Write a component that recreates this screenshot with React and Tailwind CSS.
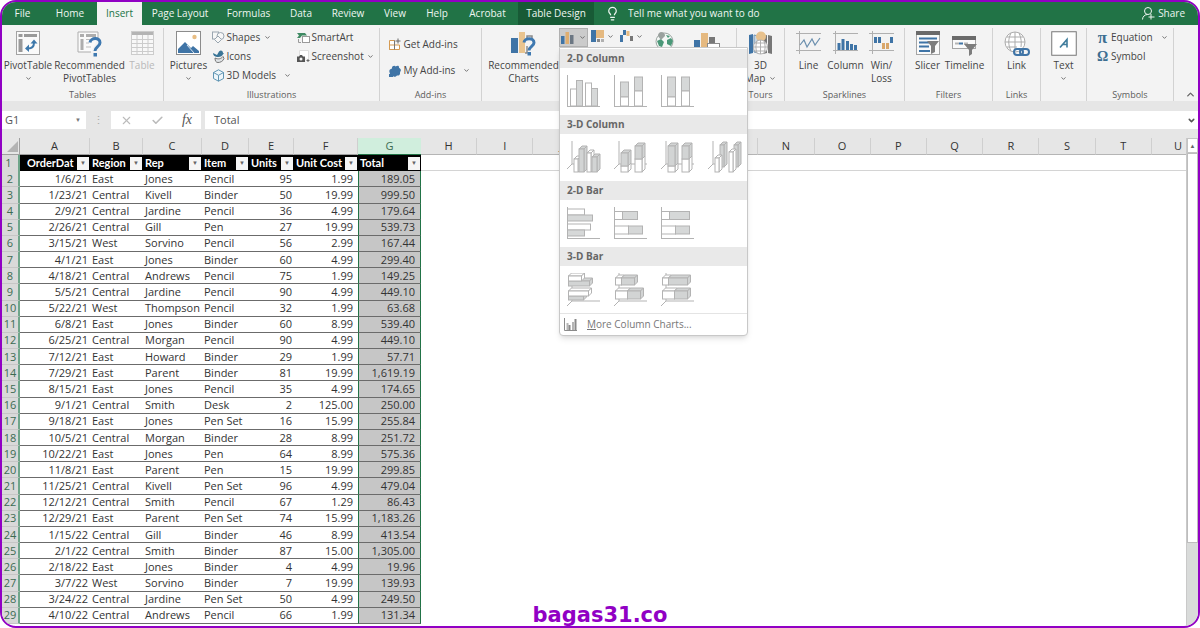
import React, { useState } from "react";
import { Lightbulb, X, Check, ChevronDown, ChevronUp } from "lucide-react";

const tabs = [
  { name: "File", width: "w-[41px]" },
  { name: "Home", width: "w-[54px]" },
  { name: "Insert", width: "w-[45px]" },
  { name: "Page Layout", width: "w-[76px]" },
  { name: "Formulas", width: "w-[61px]" },
  { name: "Data", width: "w-[44px]" },
  { name: "Review", width: "w-[50px]" },
  { name: "View", width: "w-[44px]" },
  { name: "Help", width: "w-[40px]" },
  { name: "Acrobat", width: "w-[61px]" },
  { name: "Table Design", width: "w-[76px]" },
];

const columns = [
  { letter: "A", title: "OrderDat", width: "w-[70px]", align: "text-right pr-[2px]" },
  { letter: "B", title: "Region", width: "w-[53px]", align: "pl-[2px]" },
  { letter: "C", title: "Rep", width: "w-[59px]", align: "pl-[2px]" },
  { letter: "D", title: "Item", width: "w-[47px]", align: "pl-[2px]" },
  { letter: "E", title: "Units", width: "w-[45px]", align: "text-right pr-[2px]" },
  { letter: "F", title: "Unit Cost", width: "w-[64px]", align: "text-right pr-[5px]" },
  { letter: "G", title: "Total", width: "w-[63px]", align: "text-right pr-[5px]" },
];

const emptyColumns = ["H", "I", "J", "K", "L", "M", "N", "O", "P", "Q", "R", "S", "T"];

const orders = [
  ["1/6/21", "East", "Jones", "Pencil", "95", "1.99", "189.05"],
  ["1/23/21", "Central", "Kivell", "Binder", "50", "19.99", "999.50"],
  ["2/9/21", "Central", "Jardine", "Pencil", "36", "4.99", "179.64"],
  ["2/26/21", "Central", "Gill", "Pen", "27", "19.99", "539.73"],
  ["3/15/21", "West", "Sorvino", "Pencil", "56", "2.99", "167.44"],
  ["4/1/21", "East", "Jones", "Binder", "60", "4.99", "299.40"],
  ["4/18/21", "Central", "Andrews", "Pencil", "75", "1.99", "149.25"],
  ["5/5/21", "Central", "Jardine", "Pencil", "90", "4.99", "449.10"],
  ["5/22/21", "West", "Thompson", "Pencil", "32", "1.99", "63.68"],
  ["6/8/21", "East", "Jones", "Binder", "60", "8.99", "539.40"],
  ["6/25/21", "Central", "Morgan", "Pencil", "90", "4.99", "449.10"],
  ["7/12/21", "East", "Howard", "Binder", "29", "1.99", "57.71"],
  ["7/29/21", "East", "Parent", "Binder", "81", "19.99", "1,619.19"],
  ["8/15/21", "East", "Jones", "Pencil", "35", "4.99", "174.65"],
  ["9/1/21", "Central", "Smith", "Desk", "2", "125.00", "250.00"],
  ["9/18/21", "East", "Jones", "Pen Set", "16", "15.99", "255.84"],
  ["10/5/21", "Central", "Morgan", "Binder", "28", "8.99", "251.72"],
  ["10/22/21", "East", "Jones", "Pen", "64", "8.99", "575.36"],
  ["11/8/21", "East", "Parent", "Pen", "15", "19.99", "299.85"],
  ["11/25/21", "Central", "Kivell", "Pen Set", "96", "4.99", "479.04"],
  ["12/12/21", "Central", "Smith", "Pencil", "67", "1.29", "86.43"],
  ["12/29/21", "East", "Parent", "Pen Set", "74", "15.99", "1,183.26"],
  ["1/15/22", "Central", "Gill", "Binder", "46", "8.99", "413.54"],
  ["2/1/22", "Central", "Smith", "Binder", "87", "15.00", "1,305.00"],
  ["2/18/22", "East", "Jones", "Binder", "4", "4.99", "19.96"],
  ["3/7/22", "West", "Sorvino", "Binder", "7", "19.99", "139.93"],
  ["3/24/22", "Central", "Jardine", "Pen Set", "50", "4.99", "249.50"],
  ["4/10/22", "Central", "Andrews", "Pencil", "66", "1.99", "131.34"],
];

/* ---------- ribbon icons ---------- */

const PivotIcon = () => (
  <svg width="24" height="24" viewBox="0 0 24 24" fill="none">
    <rect x="0.5" y="0.5" width="23" height="23" fill="#fafafa" stroke="#a3a3a3" />
    <rect x="2.5" y="3" width="4" height="3" fill="#9a9a9a" />
    <rect x="8" y="3" width="13" height="3" fill="#9a9a9a" />
    <rect x="2.5" y="8" width="4" height="13" fill="#9a9a9a" />
    <path d="M12 17.500c4 0 6-2 6-6" stroke="#3d78ab" strokeWidth="2" />
    <path d="M14.500 12.500l3.500-4 3.500 4zM13 13.500l-4 4 4 3.500z" fill="#3d78ab" />
  </svg>
);

const RecommendedPivotIcon = () => (
  <svg width="25" height="26" viewBox="0 0 25 26" fill="none">
    <path d="M21 8V1H1v20h13" fill="#fafafa" stroke="#adadad" />
    <path d="M3 4.500h4M9 4.500h10M5 8v11" stroke="#adadad" strokeWidth="3" />
    <path d="M9 8.500h4M9 12h3M9 16h5" stroke="#bdbdbd" />
    <path d="M13 11.500c.5-5 10-5.500 10 .2 0 4-5 3.800-5 8.300" stroke="#3f79b0" strokeWidth="3" />
    <rect x="16.500" y="22" width="3.500" height="3.500" fill="#3f79b0" />
  </svg>
);

const TableIcon = () => (
  <svg width="23" height="24" viewBox="0 0 23 24" fill="none" stroke="#cccccc">
    <rect x="0.5" y="0.5" width="22" height="23" fill="#f8f8f8" />
    <rect x="1" y="1" width="21" height="3" fill="#b4b4b4" stroke="none" />
    <path d="M0 8.500h23M0 12.500h23M0 16.500h23M0 20.500h23M6 4v20M11.500 4v20M17 4v20" />
  </svg>
);

const PicturesIcon = () => (
  <svg width="25" height="24" viewBox="0 0 25 24" fill="none">
    <rect x="0.5" y="0.5" width="24" height="23" fill="#fff" stroke="#8c8c8c" />
    <circle cx="18.500" cy="6" r="2.200" fill="#e8bd84" />
    <path d="M2 22v-4l7-7 6 6 2-2 6 5v2z" fill="#3f74a6" />
    <path d="M11 14l7 8" stroke="#fff" strokeWidth="0.8" />
  </svg>
);

const ShapesIcon = () => (
  <svg width="13" height="13" viewBox="0 0 13 13" fill="#f7f7f7" stroke="#9aa6b0">
    <rect x="0.5" y="1" width="6" height="7" />
    <circle cx="8.500" cy="5" r="3.500" />
    <path d="M6 5l3.500 3.500L6 12 2.500 8.500z" />
  </svg>
);

const DuckIcon = () => (
  <svg width="13" height="13" viewBox="0 0 13 13" fill="none">
    <path d="M1 3l4 2 2-3.500C9-.5 11 1 11 3l1 .5-1 .8C10.500 6 8 7.500 5 7 2.500 6.700 1 5 1 3z" fill="#3a7597" />
    <path d="M3 8c3 1.500 6 1 8-1.500l1 2c-1 3-4 4-6 4s-3-1.500-3-4.500z" fill="#dfe3e6" stroke="#777" />
  </svg>
);

const CubeIcon = () => (
  <svg width="13" height="13" viewBox="0 0 13 13" fill="none" stroke="#5f95b3">
    <path d="M6.500.8l5 2.700v6l-5 2.700-5-2.700v-6z" fill="#eef6fa" />
    <path d="M1.500 3.500l5 2.800 5-2.800M6.500 6.300v5.900" />
  </svg>
);

const SmartArtIcon = () => (
  <svg width="13" height="12" viewBox="0 0 13 12" fill="none">
    <path d="M0 1h8l2 2.500H5L3 6H0l2-2.500z" fill="#3f8a63" />
    <rect x="5.500" y="4.500" width="7" height="6" fill="#fff" stroke="#9a9a9a" />
    <path d="M1.500 7v3.500H4" stroke="#9a9a9a" />
  </svg>
);

const ScreenshotIcon = () => (
  <svg width="13" height="13" viewBox="0 0 13 13" fill="none">
    <path d="M2.500 5V.5h9V9" fill="#fff" stroke="#dedede" />
    <path d="M0 6.500h2l1-1.500h2l1 1.500h2V12H0z" fill="#555" />
    <circle cx="4" cy="9" r="1.500" fill="#f3f3f3" />
    <path d="M9.500 10.500h3M11 9v3" stroke="#666" />
  </svg>
);

const StoreIcon = () => (
  <svg width="12" height="13" viewBox="0 0 12 13" fill="none">
    <path d="M.5 2.500h5v9h-5zM.5 7h10v4.500h-10z" stroke="#d69b52" fill="#fff" />
    <path d="M5.500 2.500v9" stroke="#777" />
    <path d="M9 .5v5M6.500 3h5" stroke="#666" />
  </svg>
);

const MyAddinsIcon = () => (
  <svg width="12" height="12" viewBox="0 0 12 12" fill="#3f74a6">
    <path d="M3 3.500C2.500 1 6 0 6.500 1.500 9 0 10.500 1 10 3c2 .5 2.500 3 1 4 .5 2.500-1 4-3 3.500C6.500 12.500 4 12 4 10.500 1.500 11.500 0 10.500 1 8.500-.5 6 .5 4 3 3.500z" />
    <path d="M0 9h4v3H0z" />
  </svg>
);

const RecommendedChartsIcon = () => (
  <svg width="25" height="26" viewBox="0 0 25 26" fill="none">
    <rect x="0" y="7" width="7" height="15" fill="#3f74a6" />
    <rect x="8" y="1" width="6" height="21" fill="#e9c48f" />
    <path d="M16 9V5h5v4M16 15v7h-2" stroke="#8b8b8b" strokeWidth="1.500" />
    <path d="M13 11.500c.5-5 10-5 10 .2 0 3.500-5 3.800-5 7.800" stroke="#3f79b0" strokeWidth="3" />
    <rect x="16.500" y="21" width="3.500" height="3.500" fill="#3f79b0" />
  </svg>
);

const MiniColumnIcon = () => (
  <svg width="13" height="12" viewBox="0 0 13 12">
    <rect x="0" y="4" width="3.500" height="8" fill="#3f74a6" />
    <rect x="4.500" y="0" width="3.500" height="12" fill="#dfae70" />
    <rect x="9" y="3" width="3.500" height="9" fill="#6c7783" />
  </svg>
);

const MiniTreemapIcon = () => (
  <svg width="13" height="12" viewBox="0 0 13 12">
    <rect x="0" y="0" width="5" height="12" fill="#3f74a6" />
    <rect x="5" y="0" width="8" height="8" fill="#e5b980" />
    <rect x="6" y="9" width="3" height="3" fill="#8a8a8a" />
    <rect x="10" y="9" width="3" height="3" fill="#b0b0b0" />
  </svg>
);

const MiniWaterfallIcon = () => (
  <svg width="13" height="12" viewBox="0 0 13 12">
    <rect x="0" y="5" width="3" height="7" fill="#3f74a6" />
    <rect x="3" y="0" width="3" height="5" fill="#3f74a6" />
    <rect x="6.500" y="1" width="3" height="5" fill="#e5b980" />
    <rect x="10" y="6" width="3" height="5" fill="#777" />
  </svg>
);

const MapsIcon = () => (
  <svg width="19" height="18" viewBox="0 0 19 18">
    <circle cx="9.500" cy="9.500" r="8.500" fill="#f4f7f5" stroke="#9aa5a0" />
    <path d="M2 9l4-2 3 3-2 5-3-1zM12 8l4-2 2 3-2 5-4-2zM11 3l4 1-2 2z" fill="#4a9878" />
    <path d="M6 0a4 4 0 0 1 4 4L6 8 3 4a4 4 0 0 1 3-4z" fill="#9aa19e" />
  </svg>
);

const PivotChartIcon = () => (
  <svg width="26" height="18" viewBox="0 0 26 18">
    <rect x="0" y="8" width="6" height="10" fill="#3f74a6" />
    <rect x="7" y="1" width="7" height="17" fill="#e5b980" />
    <rect x="15" y="5" width="6" height="8" fill="#777" />
    <rect x="13.500" y="11.500" width="12" height="6" fill="#fff" stroke="#8a8a8a" />
  </svg>
);

const Map3dIcon = () => (
  <svg width="23" height="24" viewBox="0 0 23 24" fill="none">
    <path d="M0 4l4-1v19l-4 1z" fill="#3f74a6" />
    <path d="M5 4l4 1v17l-4-1z" fill="#c9d7e3" stroke="#6f93b3" />
    <path d="M14 5l4-1v18l-4 1zM19 4l4 1v18l-4-1z" fill="#777" />
    <circle cx="12" cy="5.500" r="5" fill="#e7c18d" />
    <circle cx="11.500" cy="16" r="7" fill="#fff" stroke="#b0b0b0" />
    <path d="M4.500 16h14M6 12h11M6 20h11M11.500 9v14M8 10c-1.500 4-1.500 8 0 12M15 10c1.500 4 1.500 8 0 12" stroke="#b0b0b0" />
  </svg>
);

const LineIcon = () => (
  <svg width="25" height="23" viewBox="0 0 25 23" fill="none">
    <path d="M0 2.500h25M0 19.500h25M3.500 0v23" stroke="#b0b0b0" />
    <path d="M4 14l4-5 3 7 5-8 3 6 5-7" stroke="#6b8fae" strokeWidth="1.200" />
  </svg>
);

const ColumnIcon = () => (
  <svg width="25" height="23" viewBox="0 0 25 23" fill="none">
    <path d="M0 2.500h25M0 19.500h25M2.500 0v23" stroke="#b0b0b0" />
    <path d="M6 19v-7M10 19V8M14.500 19v-9M18.500 19v-6M22.500 19v-5" stroke="#3f74a6" strokeWidth="3" />
  </svg>
);

const WinLossIcon = () => (
  <svg width="25" height="23" viewBox="0 0 25 23" fill="none">
    <path d="M0 2.500h25M0 19.500h25M3.500 0v23" stroke="#b0b0b0" />
    <path d="M6.500 6v6M10.500 6v6M22.500 6v6" stroke="#3f74a6" strokeWidth="3" />
    <path d="M14.500 12v6M18.500 12v6" stroke="#d9a76b" strokeWidth="3" />
  </svg>
);

const SlicerIcon = () => (
  <svg width="24" height="24" viewBox="0 0 24 24" fill="none">
    <rect x="0.5" y="0.5" width="23" height="23" fill="#fafafa" stroke="#a5a5a5" />
    <rect width="24" height="4" fill="#6a6a6a" />
    <path d="M3 7.500h18M3 11.500h10M3 15.500h10M3 20h11" stroke="#3f74a6" strokeWidth="2" />
    <path d="M11 10h12l-4 5v6l-4 2v-8z" fill="#7d7d7d" />
  </svg>
);

const TimelineIcon = () => (
  <svg width="25" height="25" viewBox="0 0 25 25" fill="none">
    <rect x="0.5" y="5.500" width="23" height="12" fill="#fafafa" stroke="#a5a5a5" />
    <rect y="5" width="24" height="4" fill="#6a6a6a" />
    <path d="M3 12.500h4M12 12.500h4" stroke="#b5b5b5" strokeWidth="2" />
    <path d="M7 12.500h4" stroke="#3f74a6" strokeWidth="2" />
    <path d="M12 13h13l-5 6v4l-3 2v-6z" fill="#7d7d7d" />
  </svg>
);

const LinkIcon = () => (
  <svg width="26" height="26" viewBox="0 0 26 26" fill="none">
    <circle cx="11" cy="11" r="10" fill="#fff" stroke="#ababab" />
    <path d="M1 11h20M3 6h16M3 16h10M11 1v17M7 2c-3 6-3 12 0 18M15 2c2.500 5 2.500 10 2 14" stroke="#ababab" />
    <rect x="10" y="18" width="9" height="6" rx="3" stroke="#3f74a6" strokeWidth="2" />
    <rect x="16" y="18" width="9" height="6" rx="3" stroke="#3f74a6" strokeWidth="2" />
  </svg>
);

const TextIcon = () => (
  <svg width="26" height="25" viewBox="0 0 26 25" fill="none">
    <rect x="0.750" y="0.750" width="24.500" height="23.500" fill="#fff" stroke="#777" />
    <path d="M9 16.500l7-8 0 8M11.500 13.500h4.500" stroke="#3f7c9c" strokeWidth="1.600" />
  </svg>
);

const ShareIcon = () => (
  <svg width="13" height="13" viewBox="0 0 13 13" fill="none" stroke="currentColor">
    <circle cx="6" cy="4" r="3.500" />
    <path d="M.5 12.500C.5 9.500 3 7.500 5.500 7.500M9 7v5.500M6.500 10h6" />
  </svg>
);

/* ---------- chart gallery icons ---------- */

const Thumb = ({ children }) => (
  <svg width="34" height="34" viewBox="0 0 34 34" fill="none" stroke="#b3b3b3">
    {children}
  </svg>
);

const Axes2d = () => <path d="M.5 0v31.500M0 31.500h33" />;

// flat bars: x, y, width, height, shaded
const Bars = ({ items }) =>
  items.map(([x, y, w, h, filled], i) => (
    <rect key={i} x={x} y={y} width={w} height={h} fill={filled ? "#d6d8d8" : "#fff"} />
  ));

// same numbers, with a top and a right face
const Boxes = ({ items }) =>
  items.map(([x, y, w, h, filled, d = 3], i) => (
    <g key={i} fill={filled ? "#d2d4d4" : "#fff"}>
      <path d={`M${x} ${y}l${d} ${-d}h${w}l${-d} ${d}z`} />
      <path d={`M${x + w} ${y}l${d} ${-d}v${h}l${-d} ${d}z`} />
      <rect x={x} y={y} width={w} height={h} />
    </g>
  ));

const gallery = [
  {
    title: "2-D Column",
    charts: [
      { name: "Clustered Column", art: <><Bars items={[[3.5, 14, 6, 17], [9.5, 5.500, 6, 25.500, 1], [18.5, 8, 6, 23], [24.5, 13.500, 6, 17.500, 1]]} /><Axes2d /></> },
      { name: "Stacked Column", art: <><Bars items={[[6.5, 7, 8, 15, 1], [6.5, 22, 8, 9], [20.5, 2, 8, 14, 1], [20.5, 16, 8, 15]]} /><Axes2d /></> },
      { name: "100% Stacked Column", art: <><Bars items={[[6.5, 2, 8, 20, 1], [6.5, 22, 8, 9], [20.5, 2, 8, 14, 1], [20.5, 16, 8, 15]]} /><Axes2d /></> },
    ],
  },
  {
    title: "3-D Column",
    charts: [
      { name: "3-D Clustered Column", art: <><path d="M5 0v23M5 23l-5 5M5 23h5" /><Boxes items={[[7, 18, 4, 13], [12, 8, 5, 23, 1], [20, 12, 4, 19], [25, 16, 5, 15, 1]]} /></> },
      { name: "3-D Stacked Column", art: <><path d="M5 0v23M5 23l-5 5M5 23h28" /><Boxes items={[[7, 25, 7, 6], [7, 12, 7, 13, 1], [21, 18, 7, 13], [21, 5, 7, 13, 1]]} /></> },
      { name: "3-D 100% Stacked Column", art: <><path d="M5 0v23M5 23l-5 5M5 23h28" /><Boxes items={[[7, 25, 7, 6], [7, 5, 7, 20, 1], [21, 18, 7, 13], [21, 5, 7, 13, 1]]} /></> },
      { name: "3-D Column", art: <><path d="M5 0v23M5 23l-5 5M5 23h5" /><Boxes items={[[12, 4, 4, 22, 1], [26, 4, 4, 22, 1], [7, 17, 4, 14], [21, 11, 4, 20]]} /></> },
    ],
  },
  {
    title: "2-D Bar",
    charts: [
      { name: "Clustered Bar", art: <><Bars items={[[0.5, 2, 17, 6], [0.5, 8, 25, 6, 1], [0.5, 17, 23, 6], [0.5, 23, 17, 6, 1]]} /><Axes2d /></> },
      { name: "Stacked Bar", art: <><Bars items={[[0.5, 4.500, 8, 8], [8.5, 4.500, 15, 8, 1], [0.5, 19, 14, 8], [14.5, 19, 14, 8, 1]]} /><Axes2d /></> },
      { name: "100% Stacked Bar", art: <><Bars items={[[0.5, 4.500, 8, 8], [8.5, 4.500, 20, 8, 1], [0.5, 19, 14, 8], [14.5, 19, 14, 8, 1]]} /><Axes2d /></> },
    ],
  },
  {
    title: "3-D Bar",
    charts: [
      { name: "3-D Clustered Bar", art: <><path d="M5 0v28l-5 5M5 28h28" /><Boxes items={[[1.5, 23, 15, 4, 1], [1.5, 18, 20, 5], [1.5, 8, 21, 5, 1], [1.5, 3, 13, 5]]} /></> },
      { name: "3-D Stacked Bar", art: <><path d="M5 0v28l-5 5M5 28h28" /><Boxes items={[[1.5, 18, 12, 8], [13.5, 18, 13, 8, 1], [1.5, 5, 6, 7], [7.5, 5, 13, 7, 1]]} /></> },
      { name: "3-D 100% Stacked Bar", art: <><path d="M5 0v28l-5 5M5 28h28" /><Boxes items={[[1.5, 18, 12, 8], [13.5, 18, 13, 8, 1], [1.5, 5, 6, 7], [7.5, 5, 19, 7, 1]]} /></> },
    ],
  },
];

/* ---------- ribbon building blocks ---------- */

const Caret = () => <ChevronDown className="w-[7px] h-[7px] shrink-0 text-[#666]" strokeWidth={3} />;

const Group = ({ label, className, align = "justify-center", children }) => (
  <div className={`flex flex-col shrink-0 pt-[3px] ${className}`}>
    <div className="flex flex-1 border-r border-[#d2d2d2] flex-col">
      <div className={`flex flex-1 ${align}`}>{children}</div>
      <div className="h-[12px] text-center text-[9px] leading-[12px] text-[#5c5c5c]">{label}</div>
    </div>
  </div>
);

const BigButton = ({ icon, lines, caret, className = "", disabled }) => (
  <button
    disabled={disabled}
    className={`flex flex-col items-center shrink-0 pt-[3px] whitespace-nowrap text-[#444] disabled:text-[#b9b9b9] ${className}`}
  >
    <span className="flex h-[28px] items-start">{icon}</span>
    {lines.map((line, i) => (
      <span key={line} className="flex items-center gap-[4px] text-[10px] leading-[13px]">
        {line}
        {caret === "inline" && i === lines.length - 1 && <Caret />}
      </span>
    ))}
    {caret === "below" && <span className="pt-[3px]"><Caret /></span>}
  </button>
);

const SmallButton = ({ icon, label, caret, gap = "gap-[4px]", className = "" }) => (
  <button className={`flex items-center gap-[2px] whitespace-nowrap text-[10px] leading-[19px] text-[#444] ${className}`}>
    <span className="flex w-[13px] shrink-0 justify-center">{icon}</span>
    <span className={`flex items-center ${gap}`}>
      {label}
      {caret && <Caret />}
    </span>
  </button>
);

const ChartMenu = () => (
  <div className="absolute left-0 top-full z-20 w-[189px] rounded-b-sm border border-[#c8c8c8] bg-white pt-px shadow-md">
    {gallery.map((section) => (
      <section key={section.title}>
        <h3 className="h-[19px] bg-[#e9e9e9] pl-[7px] text-[10px] font-bold leading-[19px] text-[#666]">{section.title}</h3>
        <div className="flex h-[47px] items-center gap-[13px] pl-[7px]">
          {section.charts.map((chart) => (
            <button key={chart.name} aria-label={chart.name}>
              <Thumb>{chart.art}</Thumb>
            </button>
          ))}
        </div>
      </section>
    ))}
    <button className="flex h-[22px] w-full items-center gap-[10px] border-t border-[#e4e4e4] pl-[4px] text-[10px] text-[#777]">
      <svg width="13" height="13" viewBox="0 0 13 13" fill="none" stroke="#8a8a8a">
        <path d="M.5 0v12.500H13" />
        <path d="M3.500 5v7M9 4v8" stroke="#b5b5b5" strokeWidth="2" />
        <path d="M5.500 7v5M11.500 1v11" strokeWidth="2" />
      </svg>
      <span>
        <span className="underline">M</span>ore Column Charts...
      </span>
    </button>
  </div>
);

const TabBar = ({ active, onSelect }) => (
  <nav className="flex h-[23px] shrink-0 bg-[#217346] text-[10px] text-[#eef6f1]">
    {tabs.map((tab) => (
      <button
        key={tab.name}
        onClick={() => onSelect(tab.name)}
        className={`shrink-0 whitespace-nowrap text-center ${tab.width} ${
          active === tab.name ? "bg-[#f3f3f3] text-[#217346]" : tab.name === "Table Design" ? "bg-[#185a36]" : ""
        }`}
      >
        {tab.name}
      </button>
    ))}
    <label className="flex flex-1 items-center gap-[8px] pl-[11px]">
      <Lightbulb className="h-[15px] w-[15px] shrink-0" strokeWidth={2} />
      <input
        aria-label="Tell me what you want to do"
        placeholder="Tell me what you want to do"
        className="w-full bg-transparent outline-none placeholder:text-[#eef6f1]"
      />
    </label>
    <button className="flex items-center gap-[3px] pr-[13px]">
      <ShareIcon />
      Share
    </button>
  </nav>
);

const Ribbon = ({ menuOpen, onToggleMenu }) => (
  <div className="flex h-[76px] shrink-0 bg-[#f3f3f3]">
    <Group label="Tables" className="w-[162px]" align="justify-start">
      <BigButton className="w-[52px]" icon={<PivotIcon />} lines={["PivotTable"]} caret="below" />
      <BigButton className="w-[71px]" icon={<RecommendedPivotIcon />} lines={["Recommended", "PivotTables"]} />
      <BigButton className="w-[34px]" icon={<TableIcon />} lines={["Table"]} disabled />
    </Group>
    <Group label="Illustrations" className="w-[216px]">
      <BigButton className="w-[46px]" icon={<PicturesIcon />} lines={["Pictures"]} caret="below" />
      <div className="flex w-[85px] flex-col">
        <SmallButton icon={<ShapesIcon />} label="Shapes" caret />
        <SmallButton icon={<DuckIcon />} label="Icons" />
        <SmallButton icon={<CubeIcon />} label="3D Models" caret gap="gap-[8px]" />
      </div>
      <div className="flex w-[81px] flex-col">
        <SmallButton icon={<SmartArtIcon />} label="SmartArt" />
        <SmallButton icon={<ScreenshotIcon />} label="Screenshot" caret gap="gap-[3px]" />
      </div>
    </Group>
    <Group label="Add-ins" className="w-[102px]">
      <div className="flex w-[84px] flex-col gap-[7px] pt-[7px]">
        <SmallButton icon={<StoreIcon />} label="Get Add-ins" />
        <SmallButton icon={<MyAddinsIcon />} label="My Add-ins" caret gap="gap-[8px]" />
      </div>
    </Group>
    <Group label="" className="min-w-[255px] flex-1">
      <div className="flex flex-1 pl-[6px]">
        <BigButton className="w-[71px]" icon={<RecommendedChartsIcon />} lines={["Recommended", "Charts"]} />
        <div className="relative flex h-[19px]">
          <button
            aria-label="Insert Column or Bar Chart"
            onClick={onToggleMenu}
            className="flex w-[29px] items-center justify-center gap-[5px] border border-[#b0b0b0] bg-[#cbcbcb]"
          >
            <MiniColumnIcon />
            <Caret />
          </button>
          {menuOpen && <ChartMenu />}
        </div>
        <div className="flex items-start gap-[6px] pl-[3px] pt-[2px]">
          <button aria-label="Insert Hierarchy Chart" className="flex items-center gap-[3px]">
            <MiniTreemapIcon />
            <Caret />
          </button>
          <button aria-label="Insert Waterfall Chart" className="flex items-center gap-[3px]">
            <MiniWaterfallIcon />
            <Caret />
          </button>
        </div>
        <button aria-label="Maps" className="flex items-start pl-[12px] pt-[4px]">
          <MapsIcon />
        </button>
        <button aria-label="PivotChart" className="flex items-start pl-[20px] pt-[4px]">
          <PivotChartIcon />
        </button>
      </div>
    </Group>
    <Group label="Tours" className="w-[48px]">
      <BigButton icon={<Map3dIcon />} lines={["3D", "Map"]} caret="inline" />
    </Group>
    <Group label="Sparklines" className="w-[120px]">
      <BigButton className="w-[36px]" icon={<LineIcon />} lines={["Line"]} />
      <BigButton className="w-[38px]" icon={<ColumnIcon />} lines={["Column"]} />
      <BigButton className="w-[34px]" icon={<WinLossIcon />} lines={["Win/", "Loss"]} />
    </Group>
    <Group label="Filters" className="w-[88px]">
      <BigButton className="w-[32px]" icon={<SlicerIcon />} lines={["Slicer"]} />
      <BigButton className="w-[42px]" icon={<TimelineIcon />} lines={["Timeline"]} />
    </Group>
    <Group label="Links" className="w-[48px]">
      <BigButton icon={<LinkIcon />} lines={["Link"]} />
    </Group>
    <Group label="" className="w-[46px]">
      <BigButton icon={<TextIcon />} lines={["Text"]} caret="below" />
    </Group>
    <Group label="Symbols" className="w-[87px]">
      <div className="flex w-[68px] flex-col">
        <SmallButton
          icon={<span className="font-['Liberation_Serif',serif] text-[17px] font-bold text-[#3c6e91]">π</span>}
          label="Equation"
          caret
          gap="gap-[8px]"
        />
        <SmallButton
          icon={<span className="font-['Liberation_Serif',serif] text-[14px] font-bold text-[#3c6e91]">Ω</span>}
          label="Symbol"
        />
      </div>
    </Group>
    <button aria-label="Collapse the Ribbon" className="flex w-[24px] shrink-0 items-end justify-end pb-px pr-[2px]">
      <ChevronUp className="h-[11px] w-[11px] text-[#666]" strokeWidth={3} />
    </button>
  </div>
);

const FormulaBar = () => (
  <div className="flex h-[37px] shrink-0 bg-[#e6e6e6] pb-[9px] pt-[10px] text-[11px] text-[#555]">
    <div className="flex w-[84px] shrink-0 items-center justify-between bg-white pl-[3px] pr-[5px]">
      <input aria-label="Name Box" defaultValue="G1" className="w-[50px] outline-none" />
      <span className="text-[6px] text-[#777]">▼</span>
    </div>
    <span className="w-[25px] text-center leading-[18px] text-[#aaa]">⋮</span>
    <div className="flex w-[90px] shrink-0 items-center justify-around bg-white">
      <button aria-label="Cancel"><X className="h-[13px] w-[13px] text-[#bbb]" strokeWidth={2} /></button>
      <button aria-label="Enter"><Check className="h-[13px] w-[13px] text-[#bbb]" strokeWidth={3} /></button>
      <button className="font-['Liberation_Serif',serif] text-[14px] italic leading-none">fx</button>
    </div>
    <div className="ml-[4px] flex flex-1 items-center bg-white pl-[9px] pr-[2px]">
      <input aria-label="Formula Bar" defaultValue="Total" className="flex-1 outline-none" />
      <ChevronDown className="h-[9px] w-[9px] text-[#555]" strokeWidth={4} />
    </div>
  </div>
);

const Sheet = () => (
  <div className="flex min-h-0 flex-1">
    <div className="min-w-0 flex-1 pb-[2px]">
      <table className="h-full w-full table-fixed border-separate border-spacing-0 text-[11px] leading-[14px] text-[#333]">
        <colgroup>
          <col className="w-[18px]" />
          {columns.map((col) => (
            <col key={col.letter} className={col.width} />
          ))}
          {emptyColumns.map((letter) => (
            <col key={letter} />
          ))}
          <col className="w-[34px]" />
        </colgroup>
        <thead>
          <tr className="h-[17px] bg-[#e6e6e6]">
            <th className="border-b border-r border-[#9f9f9f] p-0">
              <svg className="ml-auto" width="13" height="13" viewBox="0 0 13 13">
                <path d="M12 1v11H1z" fill="#b3b3b3" />
              </svg>
            </th>
            {columns.map((col) => (
              <th
                key={col.letter}
                className={`border-b p-0 font-normal ${
                  col.letter === "G"
                    ? "border-[#217346] bg-[#d0eedd] text-[#3c6b52]"
                    : "border-r border-b-[#9f9f9f] border-r-[#cfcfcf]"
                }`}
              >
                {col.letter}
              </th>
            ))}
            {emptyColumns.map((letter) => (
              <th key={letter} className="border-b border-r border-b-[#b5b5b5] border-r-[#cfcfcf] p-0 font-normal">
                {letter}
              </th>
            ))}
            <th className="border-b border-[#b5b5b5] p-0 pr-[4px] text-right font-normal">U</th>
          </tr>
        </thead>
        <tbody>
          <tr className="h-[16px]">
            <th className="border-r-2 border-[#6fa58a] bg-[#d9d9d9] p-0 pr-[3px] font-normal text-[#3c6b52]">1</th>
            {columns.map((col) => (
              <th key={col.letter} className="bg-black p-0 text-white">
                <div className={`flex items-center justify-between pr-px font-['Lato','Open_Sans',sans-serif] ${col.letter === "A" ? "pl-[7px]" : "pl-[2px]"}`}>
                  <span className="whitespace-nowrap">{col.title}</span>
                  <button
                    aria-label={`Filter ${col.title}`}
                    className="flex h-[13px] w-[12px] shrink-0 items-center justify-center bg-[#f5f5f5] text-[6px] text-[#666]"
                  >
                    ▼
                  </button>
                </div>
              </th>
            ))}
            <td colSpan={14} className="border-b border-[#d4d4d4] p-0"></td>
          </tr>
          {orders.map((row, i) => (
            <tr key={i} className="h-[16px]">
              <th className="border-b border-r-2 border-b-[#c6c6c6] border-r-[#6fa58a] bg-[#d9d9d9] p-0 font-normal text-[#3c6b52]">
                {i + 2}
              </th>
              {row.map((value, c) => (
                <td
                  key={c}
                  className={`whitespace-nowrap border-b border-b-[#6b6b6b] p-0 ${columns[c].align} ${
                    c === 6 ? "border-x border-x-[#217346] bg-[#c6c6c6]" : ""
                  }`}
                >
                  {value}
                </td>
              ))}
              <td colSpan={14} className="p-0"></td>
            </tr>
          ))}
        </tbody>
      </table>
    </div>
    <div className="flex w-[12px] shrink-0 flex-col border-l border-[#c9c9c9] bg-[#d9dbda]">
      <button aria-label="Scroll up" className="h-[15px] border border-[#c4c4c4] bg-white text-[6px] leading-[12px] text-[#666]">
        ▲
      </button>
      <div className="flex-[14] border border-[#bdbdbd] bg-white"></div>
      <div className="flex-[3]"></div>
    </div>
  </div>
);

export default function App() {
  const [activeTab, setActiveTab] = useState("Insert");
  const [menuOpen, setMenuOpen] = useState(true);

  return (
    <div className="relative flex h-screen flex-col overflow-hidden rounded-2xl border-2 border-[#9100c4] bg-white font-['Open_Sans','Noto_Sans',sans-serif]">
      <TabBar active={activeTab} onSelect={setActiveTab} />
      <Ribbon menuOpen={menuOpen} onToggleMenu={() => setMenuOpen(!menuOpen)} />
      <FormulaBar />
      <Sheet />
      <a
        href="#top"
        className="absolute inset-x-0 bottom-0 mx-auto w-fit font-['DejaVu_Sans',sans-serif] text-[21px] font-bold leading-[22px] text-[#9100c4]"
      >
        bagas31.co
      </a>
    </div>
  );
}
